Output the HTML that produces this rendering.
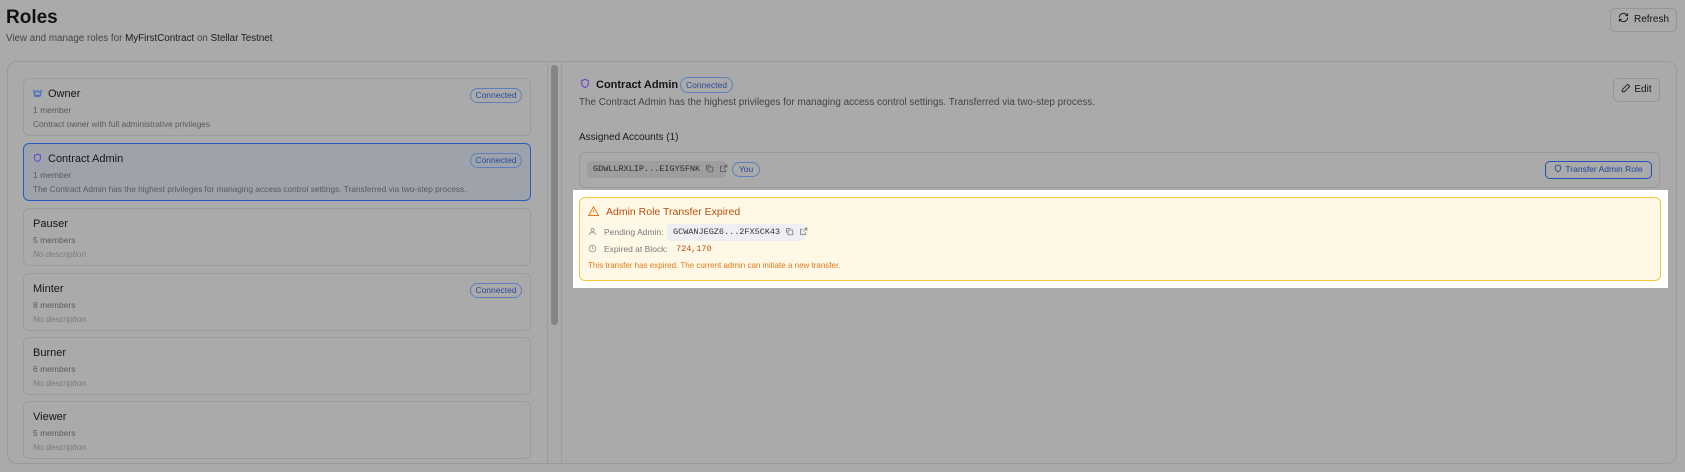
<!DOCTYPE html>
<html><head><meta charset="utf-8"><style>
*{box-sizing:border-box;margin:0;padding:0}
body{width:1685px;height:472px;background:#aaaaaa;font-family:"Liberation Sans",sans-serif;color:#141414;position:relative;overflow:hidden}
.a{position:absolute;white-space:nowrap}
.card{position:absolute;left:23px;width:508px;height:58px;border:1px solid #9c9c9c;border-radius:6px}
.card .t{position:absolute;left:9px;top:9px;font-size:11px;color:#151515}
.card .m{position:absolute;left:9px;top:26px;font-size:8.5px;color:#5a5a5a}
.card .d{position:absolute;left:9px;top:40px;font-size:8.3px;color:#5a5a5a;white-space:nowrap}
.card .d.i{font-style:italic;color:#7a7a7a}
.badge{position:absolute;border:1px solid #5d7fbf;border-radius:9px;color:#2b4a98;font-size:8.5px;text-align:center;line-height:13px;height:15px}
.mono{font-family:"Liberation Mono",monospace}
.btn{position:absolute;border:1px solid #969696;border-radius:5px;font-size:10px;color:#161616;text-align:center}
svg.ic{vertical-align:-2px}
</style></head><body>
<div class="a" style="left:6px;top:7px;font-size:19px;font-weight:bold;color:#111">Roles</div>
<div class="a" style="left:6px;top:33px;font-size:9.8px;color:#444">View and manage roles for <span style="color:#1a1a1a">MyFirstContract</span> on <span style="color:#1a1a1a">Stellar Testnet</span></div>
<div class="btn" style="left:1610px;top:8px;width:67px;height:24px;line-height:22px"><svg width="11" height="11" viewBox="0 0 24 24" style="vertical-align:-1px;margin-right:5px" fill="none" stroke="#222" stroke-width="2.2"><path d="M3 12a9 9 0 0 1 15-6.7L21 8M21 3v5h-5M21 12a9 9 0 0 1-15 6.7L3 16M3 21v-5h5"/></svg>Refresh</div>

<div class="a" style="left:7px;top:61px;width:1670px;height:403px;border:1px solid #999;border-radius:10px"></div>
<div class="a" style="left:547px;top:62px;width:1px;height:401px;background:#9c9c9c"></div>
<div class="a" style="left:561px;top:62px;width:1px;height:401px;background:#9c9c9c"></div>
<div class="a" style="left:551px;top:65px;width:7px;height:260px;background:#858585;border-radius:4px"></div>

<div class="card" style="top:78px"><div class="t"><svg width="9" height="8" viewBox="0 0 24 20" fill="none" stroke="#4a6fc0" stroke-width="3" style="margin-right:6px;vertical-align:0"><path d="M2 4l5 5 5-6 5 6 5-5-2 12H4z"/><path d="M4 19h16"/></svg>Owner</div><div class="m">1 member</div><div class="d">Contract owner with full administrative privileges</div><div class="badge" style="right:8px;top:9px;width:52px">Connected</div></div>
<div class="card" style="top:143px;background:#9ea2ab;border:1px solid #2a59c4"><div class="t"><svg width="9" height="10" viewBox="0 0 24 24" fill="none" stroke="#6a3fd0" stroke-width="2.5" style="margin-right:6px;vertical-align:-1px"><path d="M12 2l8 3v7c0 5-4 8-8 10-4-2-8-5-8-10V5z"/></svg>Contract Admin</div><div class="m">1 member</div><div class="d">The Contract Admin has the highest privileges for managing access control settings. Transferred via two-step process.</div><div class="badge" style="right:8px;top:9px;width:52px">Connected</div></div>
<div class="card" style="top:208px"><div class="t">Pauser</div><div class="m">5 members</div><div class="d i">No description</div></div>
<div class="card" style="top:273px"><div class="t">Minter</div><div class="m">8 members</div><div class="d i">No description</div><div class="badge" style="right:8px;top:9px;width:52px">Connected</div></div>
<div class="card" style="top:337px"><div class="t">Burner</div><div class="m">6 members</div><div class="d i">No description</div></div>
<div class="card" style="top:401px"><div class="t">Viewer</div><div class="m">5 members</div><div class="d i">No description</div></div>

<div class="a" style="left:580px;top:78px;font-size:11px;font-weight:bold;color:#141414"><svg width="10" height="11" viewBox="0 0 24 24" fill="none" stroke="#6a3fd0" stroke-width="2.5" style="margin-right:6px;vertical-align:-1px"><path d="M12 2l8 3v7c0 5-4 8-8 10-4-2-8-5-8-10V5z"/></svg>Contract Admin</div>
<div class="badge" style="left:680px;top:77px;width:53px;height:16px;line-height:14px">Connected</div>
<div class="a" style="left:579px;top:97px;font-size:9.9px;color:#444">The Contract Admin has the highest privileges for managing access control settings. Transferred via two-step process.</div>
<div class="btn" style="left:1613px;top:78px;width:47px;height:24px;line-height:22px"><svg width="10" height="10" viewBox="0 0 24 24" fill="none" stroke="#222" stroke-width="2.2" style="vertical-align:-1px;margin-right:3px"><path d="M16 3l5 5L8 21H3v-5z"/></svg>Edit</div>
<div class="a" style="left:579px;top:132px;font-size:10px;color:#1a1a1a">Assigned Accounts (1)</div>
<div class="a" style="left:579px;top:152px;width:1081px;height:36px;border:1px solid #999;border-radius:6px"></div>
<div class="a mono" style="left:587px;top:161px;width:139px;height:17px;background:#9e9e9e;border-radius:4px;font-size:8.5px;line-height:17px;padding-left:6px;color:#2a2a2a">GDWLLRXLIP...EIGY5FNK <svg class="ic" width="9" height="9" viewBox="0 0 24 24" fill="none" stroke="#555" stroke-width="2.2"><rect x="8" y="8" width="13" height="13" rx="2"/><path d="M4 16V5a1 1 0 0 1 1-1h11"/></svg> <svg class="ic" width="9" height="9" viewBox="0 0 24 24" fill="none" stroke="#555" stroke-width="2.2"><path d="M14 3h7v7M21 3l-9 9M18 14v6H4V6h6"/></svg></div>
<div class="badge" style="left:732px;top:162px;width:28px;height:15px">You</div>
<div class="a" style="left:1545px;top:161px;width:107px;height:18px;border:1.5px solid #2450b8;border-radius:5px;font-size:8.5px;color:#21459c;line-height:15px;text-align:center"><svg width="8" height="9" viewBox="0 0 24 24" fill="none" stroke="#21459c" stroke-width="2.5" style="vertical-align:-1px;margin-right:3px"><path d="M12 2l8 3v7c0 5-4 8-8 10-4-2-8-5-8-10V5z"/></svg>Transfer Admin Role</div>

<div class="a" style="left:573px;top:190px;width:1095px;height:98px;background:#fff"></div>
<div class="a" style="left:579px;top:197px;width:1082px;height:84px;background:#fff8e6;border:1px solid #f7c73a;border-radius:6px"></div>
<div class="a" style="left:588px;top:206px;font-size:10.5px;color:#b5500f"><svg width="11" height="10" viewBox="0 0 24 22" fill="none" stroke="#e27a1c" stroke-width="2.2" style="vertical-align:-1px;margin-right:7px"><path d="M12 2L23 21H1z"/><path d="M12 9v5M12 17v1"/></svg>Admin Role Transfer Expired</div>
<div class="a" style="left:588px;top:227px;font-size:8.5px;color:#7a7a7a"><svg width="9" height="9" viewBox="0 0 24 24" fill="none" stroke="#888" stroke-width="2" style="vertical-align:-1px;margin-right:7px"><circle cx="12" cy="8" r="4"/><path d="M4 21c0-5 4-7 8-7s8 2 8 7"/></svg>Pending Admin:</div>
<div class="a mono" style="left:667px;top:224px;width:138px;height:17px;background:#edeff4;border-radius:4px;font-size:8.5px;line-height:17px;padding-left:6px;color:#333">GCWANJEGZ6...2FX5CK43 <svg class="ic" width="9" height="9" viewBox="0 0 24 24" fill="none" stroke="#777" stroke-width="2.2"><rect x="8" y="8" width="13" height="13" rx="2"/><path d="M4 16V5a1 1 0 0 1 1-1h11"/></svg> <svg class="ic" width="9" height="9" viewBox="0 0 24 24" fill="none" stroke="#777" stroke-width="2.2"><path d="M14 3h7v7M21 3l-9 9M18 14v6H4V6h6"/></svg></div>
<div class="a" style="left:588px;top:244px;font-size:8.5px;color:#7a7a7a"><svg width="9" height="9" viewBox="0 0 24 24" fill="none" stroke="#888" stroke-width="2" style="vertical-align:-1px;margin-right:7px"><circle cx="12" cy="12" r="9"/><path d="M12 7v5l3 2"/></svg>Expired at Block:</div>
<div class="a mono" style="left:676px;top:244px;font-size:8.5px;color:#b5500f">724,170</div>
<div class="a" style="left:588px;top:261px;font-size:8px;color:#e07a1a">This transfer has expired. The current admin can initiate a new transfer.</div>
</body></html>
